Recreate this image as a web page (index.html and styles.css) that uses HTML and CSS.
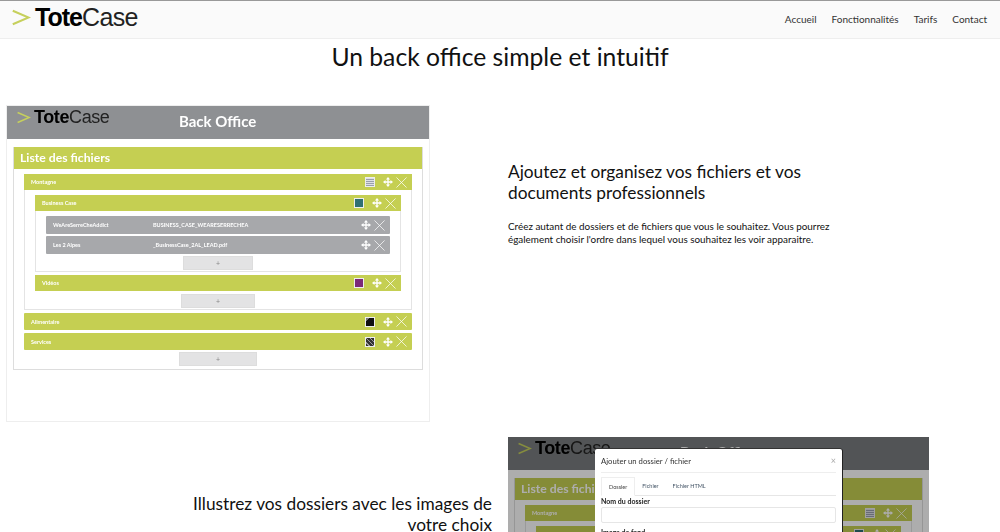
FILE: index.html
```html
<!DOCTYPE html>
<html lang="fr">
<head>
    <meta charset="UTF-8">
    <title>TotéCase - Back office</title>
    <link rel="stylesheet" href="styles.css">
</head>
<body>
    <svg class="defs" width="0" height="0">
        <symbol id="move" viewBox="0 0 12 12">
            <path d="M6 0 8.500 3H6.800V5.200H9V3.500L12 6 9 8.500V6.800H6.800V9H8.500L6 12 3.500 9H5.200V6.800H3V8.500L0 6 3 3.500V5.200H5.200V3H3.500Z" fill="#fff"/>
        </symbol>
        <symbol id="close" viewBox="0 0 12 12">
            <path d="M.5.500 11.500 11.500M11.500.500.500 11.500" stroke="#fff" stroke-width=".8" fill="none"/>
        </symbol>
        <symbol id="chevron" viewBox="0 0 24 20">
            <path d="M1 1.500 21 10 1 18.500" stroke="#c6d05c" stroke-width="2.600" fill="none"/>
        </symbol>
    </svg>

    <header class="topbar">
        <a class="logo">
            <svg class="logo-mark"><use href="#chevron"/></svg>
            <span class="logo-text"><b>Tote</b>Case</span>
        </a>
        <nav class="menu">
            <a>Accueil</a>
            <a>Fonctionnalités</a>
            <a>Tarifs</a>
            <a>Contact</a>
        </nav>
    </header>

    <h1 class="page-title">Un back office simple et intuitif</h1>

    <section class="feature">
        <div class="cell-left">
            <div class="shot">
                <div class="shot-head">
                    <span class="mini-logo">
                        <svg class="mini-mark"><use href="#chevron"/></svg>
                        <span><b>Tote</b>Case</span>
                    </span>
                    <span class="shot-title">Back Office</span>
                </div>
                <div class="panel">
                    <div class="panel-title">Liste des fichiers</div>
                    <div class="panel-body">
                        <div class="bar">
                            <span>Montagne</span>
                            <i class="thumb thumb-doc"></i>
                            <svg class="ico-move"><use href="#move"/></svg>
                            <svg class="ico-close"><use href="#close"/></svg>
                        </div>
                        <div class="box">
                            <div class="bar">
                                <span>Business Case</span>
                                <i class="thumb thumb-teal"></i>
                                <svg class="ico-move"><use href="#move"/></svg>
                                <svg class="ico-close"><use href="#close"/></svg>
                            </div>
                            <div class="box box-files">
                                <div class="file">
                                    <span class="file-name">WeAreSerreCheAddict</span>
                                    <span class="file-path">BUSINESS_CASE_WEARESERRECHEA</span>
                                    <svg class="ico-move"><use href="#move"/></svg>
                                    <svg class="ico-close"><use href="#close"/></svg>
                                </div>
                                <div class="file">
                                    <span class="file-name">Les 2 Alpes</span>
                                    <span class="file-path">_BusinessCase_2AL_LEAD.pdf</span>
                                    <svg class="ico-move"><use href="#move"/></svg>
                                    <svg class="ico-close"><use href="#close"/></svg>
                                </div>
                                <div class="add add-s">+</div>
                            </div>
                            <div class="bar">
                                <span>Vidéos</span>
                                <i class="thumb thumb-purple"></i>
                                <svg class="ico-move"><use href="#move"/></svg>
                                <svg class="ico-close"><use href="#close"/></svg>
                            </div>
                            <div class="add add-m">+</div>
                        </div>
                        <div class="bar bar-tall">
                            <span>Alimentaire</span>
                            <i class="thumb thumb-dark"></i>
                            <svg class="ico-move"><use href="#move"/></svg>
                            <svg class="ico-close"><use href="#close"/></svg>
                        </div>
                        <div class="bar bar-tall">
                            <span>Services</span>
                            <i class="thumb thumb-grey"></i>
                            <svg class="ico-move"><use href="#move"/></svg>
                            <svg class="ico-close"><use href="#close"/></svg>
                        </div>
                        <div class="add add-l">+</div>
                    </div>
                </div>
            </div>
        </div>
        <div class="cell-right copy">
            <h2>Ajoutez et organisez vos fichiers et vos documents professionnels</h2>
            <p>Créez autant de dossiers et de fichiers que vous le souhaitez. Vous pourrez également choisir l'ordre dans lequel vous souhaitez les voir apparaitre.</p>
        </div>
    </section>

    <section class="feature feature-alt">
        <div class="cell-left copy copy-right">
            <h2>Illustrez vos dossiers avec les images de votre choix</h2>
        </div>
        <div class="cell-right">
            <div class="shot shot-dim">
                <div class="shot-head">
                    <span class="mini-logo">
                        <svg class="mini-mark"><use href="#chevron"/></svg>
                        <span><b>Tote</b>Case</span>
                    </span>
                    <span class="shot-title">Back Office</span>
                </div>
                <div class="panel">
                    <div class="panel-title">Liste des fichiers</div>
                    <div class="panel-body">
                        <div class="bar">
                            <span>Montagne</span>
                            <i class="thumb thumb-doc"></i>
                            <svg class="ico-move"><use href="#move"/></svg>
                            <svg class="ico-close"><use href="#close"/></svg>
                        </div>
                        <div class="box">
                            <div class="bar">
                                <span>Business Case</span>
                                <i class="thumb thumb-teal"></i>
                                <svg class="ico-move"><use href="#move"/></svg>
                                <svg class="ico-close"><use href="#close"/></svg>
                            </div>
                        </div>
                    </div>
                </div>
                <div class="modal">
                    <div class="modal-head">
                        <span>Ajouter un dossier / fichier</span>
                        <span class="modal-x">×</span>
                    </div>
                    <div class="tabs">
                        <span class="tab tab-on">Dossier</span>
                        <span class="tab">Fichier</span>
                        <span class="tab">Fichier HTML</span>
                    </div>
                    <label class="field-label">Nom du dossier</label>
                    <div class="field"></div>
                    <label class="field-label">Image de fond</label>
                </div>
            </div>
        </div>
    </section>
</body>
</html>
```

FILE: styles.css
```css
html, body {
    height: 100%;
    overflow: hidden;
}

body {
    margin: 0;
    background: #fff;
    color: #111;
    font-family: Lato, "Open Sans", sans-serif;
}

.defs {
    position: absolute;
}

.topbar {
    display: flex;
    justify-content: space-between;
    align-items: center;
    height: 37px;
    border-top: 1px solid #999;
    border-bottom: 1px solid #eee;
    background: #fafafa;
    padding: 0 13px 0 12px;
}

.logo {
    display: flex;
    align-items: center;
    gap: 4px;
    padding-bottom: 5px;
    color: #222;
}

.logo-mark {
    width: 19px;
    height: 17px;
}

.logo-text {
    font-family: "Liberation Sans", sans-serif;
    font-size: 25px;
    letter-spacing: -0.6px;
    line-height: 30px;
}

.logo-text b {
    color: #000;
    font-weight: 700;
    letter-spacing: -1px;
}

.menu {
    display: flex;
    gap: 15px;
    padding-bottom: 2px;
    font-size: 10px;
    color: #333;
}

.page-title {
    margin: 0 0 30px;
    font-size: 24.700px;
    font-weight: 400;
    line-height: 36px;
    text-align: center;
    color: #111;
}

.feature {
    display: grid;
    grid-template-columns: 500px 500px;
    margin-bottom: 15px;
}

.cell-left {
    padding-left: 6px;
}

.cell-right {
    padding-left: 8px;
}

.copy h2 {
    margin: 0;
    font-size: 17.300px;
    font-weight: 400;
    line-height: 21px;
}

.copy p {
    margin: 17px 0 0;
    font-size: 9.900px;
    line-height: 12.500px;
}

.feature > .copy {
    padding-top: 56px;
    max-width: 340px;
}

.feature > .copy-right {
    max-width: none;
    padding-top: 56px;
    padding-left: 0;
    padding-right: 8px;
    text-align: right;
}

.copy-right h2 {
    padding-left: 180px;
}

/* the screenshots inside the page */
.shot {
    position: relative;
    width: 424px;
    height: 317px;
    box-sizing: border-box;
    border: 1px solid #eee;
    overflow: hidden;
    background: #fff;
    filter: blur(0.3px);
}

.shot-head {
    display: flex;
    height: 33px;
    background: #8e9093;
    color: #fff;
}

.mini-logo {
    display: flex;
    gap: 3px;
    width: 172px;
    padding: 1px 0 0 10px;
    box-sizing: border-box;
    font-family: "Liberation Sans", sans-serif;
    font-size: 18px;
    line-height: 20px;
    letter-spacing: -0.4px;
    color: #222;
}

.mini-logo b {
    color: #000;
}

.mini-mark {
    width: 14px;
    height: 13px;
    margin-top: 4px;
}

.shot-title {
    padding-top: 5px;
    font-size: 15px;
    font-weight: 700;
    line-height: 20px;
}

.panel {
    margin: 8px 6px 0;
    border: 1px solid #ddd;
    border-top: 0;
}

.panel-title {
    height: 22px;
    padding-left: 6px;
    background: #c5cf52;
    color: #fff;
    font-size: 12.200px;
    font-weight: 700;
    line-height: 22px;
}

.panel-body {
    display: flex;
    flex-direction: column;
    padding: 5px 10px 3px;
}

.bar {
    display: flex;
    align-items: center;
    height: 16px;
    flex: none;
    padding: 0 5px 0 7px;
    background: #c5cf52;
    color: #fff;
    font-size: 5.500px;
    font-weight: 700;
}

.bar > span:first-child {
    margin-right: auto;
}

.bar-tall {
    height: 17px;
    margin-top: 3px;
    border-radius: 1px;
}

.box {
    display: flex;
    flex-direction: column;
    padding: 5px 10px 1px;
    border: 1px solid #e4e4e4;
    border-top: 0;
    background: #fff;
}

.box-files {
    gap: 2px;
    margin-bottom: 3px;
}

.file {
    display: flex;
    align-items: center;
    height: 18px;
    padding: 0 5px 0 7px;
    border-radius: 1px;
    background: #a7a8ab;
    color: #fff;
    font-size: 5.500px;
    font-weight: 700;
}

.file-name {
    width: 100px;
}

.file-path {
    margin-right: auto;
}

.thumb {
    width: 8px;
    height: 8px;
    margin-right: 8px;
    border: 1px solid #eee;
}

.thumb-doc {
    background: repeating-linear-gradient(#dfe1e6 0 1px, #9aa0ad 1px 2px);
}

.thumb-teal {
    background: #2f6f73;
}

.thumb-purple {
    background: #7b2a78;
}

.thumb-dark {
    background: linear-gradient(135deg, #777 0 25%, #111 25%);
}

.thumb-grey {
    background: repeating-linear-gradient(45deg, #333 0 2px, #999 2px 3px);
}

.ico-move {
    width: 10px;
    height: 10px;
    margin-right: 3px;
}

.ico-close {
    width: 11px;
    height: 11px;
}

.add {
    align-self: center;
    height: 14px;
    flex: none;
    border: 1px solid #ddd;
    box-sizing: border-box;
    background: #e3e3e4;
    color: #888;
    font-size: 7px;
    line-height: 12px;
    text-align: center;
}

.add-s {
    width: 70px;
}

.add-m {
    width: 74px;
    margin-top: 3px;
}

.add-l {
    width: 78px;
    margin-top: 2px;
}

/* second screenshot: greyed page behind an open dialog */
.shot-dim {
    width: 421px;
    border: 0;
}

.shot-dim::after {
    content: "";
    position: absolute;
    inset: 0;
    background: rgba(0, 0, 0, 0.32);
}

.shot-dim .shot-head {
    background: #7a7d7f;
}

.modal {
    position: absolute;
    top: 12px;
    left: 87px;
    z-index: 1;
    width: 247px;
    height: 305px;
    box-sizing: border-box;
    padding: 0 6px;
    background: #fff;
    border-radius: 2px;
    box-shadow: 1px 0 0 #222, 0 -1px 0 #333;
    color: #333;
}

.modal-head {
    display: flex;
    justify-content: space-between;
    align-items: center;
    height: 23px;
    border-bottom: 1px solid #eee;
    font-size: 7.700px;
}

.modal-x {
    color: #aaa;
    font-size: 9px;
}

.tabs {
    display: flex;
    margin-top: 4px;
    height: 19px;
    border-bottom: 1px solid #e6e6e6;
    box-sizing: border-box;
    font-size: 5.500px;
    line-height: 18px;
    color: #456;
}

.tab {
    padding: 0 7px;
}

.tab-on {
    height: 19px;
    border: 1px solid #eee;
    border-bottom: 1px solid #fff;
    box-sizing: border-box;
    color: #444;
}

.field-label {
    display: block;
    font-size: 7px;
    font-weight: 700;
    line-height: 10px;
    color: #222;
}

.field {
    height: 14px;
    margin: 1px 0 4px;
    border: 1px solid #e6e6e6;
    border-radius: 2px;
}
```
